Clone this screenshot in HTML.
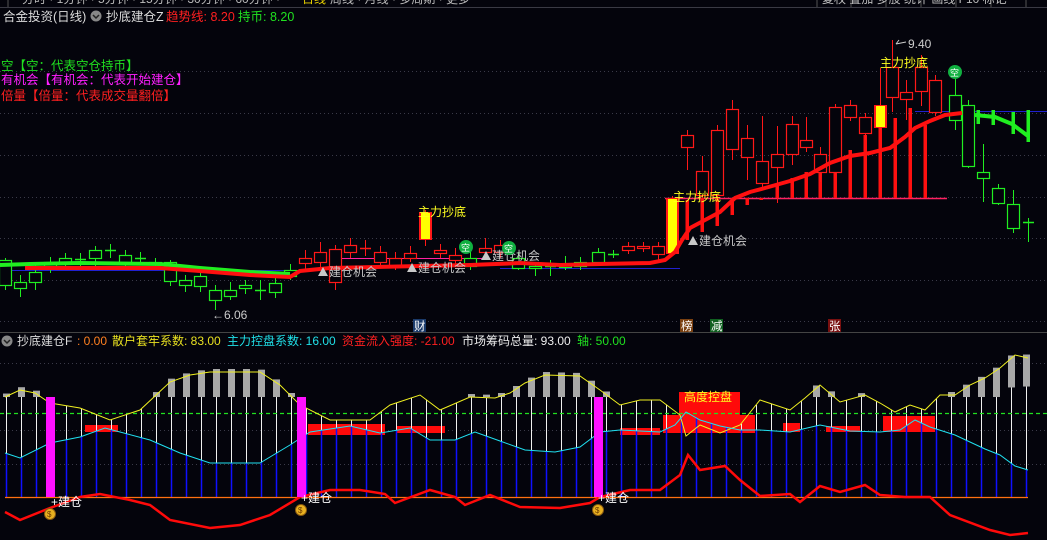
<!DOCTYPE html>
<html><head><meta charset="utf-8"><style>
html,body{margin:0;padding:0;background:#04040c;width:1047px;height:540px;overflow:hidden}
svg{display:block}
text{font-family:"Liberation Sans","Noto Sans CJK SC",sans-serif}
</style></head><body>
<svg id="s" width="1047" height="540" xmlns="http://www.w3.org/2000/svg">
<rect width="1047" height="540" fill="#04040c"/>
<!-- top menu -->
<line x1="0" y1="7.5" x2="1047" y2="7.5" stroke="#3a3a44"/>
<text x="22" y="3" fill="#bbb" font-size="12">分时 · 1分钟 · 5分钟 · 15分钟 · 30分钟 · 60分钟 · </text>
<text x="302" y="3" fill="#e8d000" font-size="12">日线</text>
<text x="330" y="3" fill="#bbb" font-size="12">周线 · 月线 · 多周期 · 更多</text>
<g stroke="#555" stroke-width="1"><line x1="817" y1="0" x2="817" y2="7"/><line x1="851" y1="0" x2="851" y2="7"/><line x1="886" y1="0" x2="886" y2="7"/><line x1="921" y1="0" x2="921" y2="7"/><line x1="956" y1="0" x2="956" y2="7"/><line x1="991" y1="0" x2="991" y2="7"/><line x1="1026" y1="0" x2="1026" y2="7"/><line x1="8" y1="0" x2="8" y2="7"/></g>
<text x="822" y="3" fill="#bbb" font-size="12">复权 叠加 多股 统计 画线 F10 标记</text>
<!-- title -->
<text x="3" y="21" fill="#ddd" font-size="12.5">合金投资(日线)</text>
<circle cx="96" cy="16" r="5.5" fill="#888"/><path d="M93 15l3 3 3-3" stroke="#222" stroke-width="1.5" fill="none"/>
<text x="106" y="21" fill="#ddd" font-size="12.5">抄底建仓Z</text>
<text x="166" y="21" fill="#ff2020" font-size="12.5">趋势线: 8.20</text>
<text x="238" y="21" fill="#20e020" font-size="12.5">持币: 8.20</text>
<text x="1" y="70" fill="#20e020" font-size="12.5">空【空：代表空仓持币】</text>
<text x="1" y="84" fill="#ff20ff" font-size="12.5">有机会【有机会：代表开始建仓】</text>
<text x="1" y="100" fill="#ff2020" font-size="12.5">倍量【倍量：代表成交量翻倍】</text>
<g id="main"></g>
<line x1="0" y1="332.5" x2="1047" y2="332.5" stroke="#444"/>
<!-- bottom header -->
<circle cx="7" cy="341" r="5.5" fill="#888"/><path d="M4 340l3 3 3-3" stroke="#222" stroke-width="1.5" fill="none"/>
<text x="17" y="345" fill="#ddd" font-size="12">抄底建仓F</text>
<text x="77" y="345" fill="#ff8020" font-size="12">: 0.00</text>
<text x="112" y="345" fill="#e8e020" font-size="12">散户套牢系数: 83.00</text>
<text x="227" y="345" fill="#20e0e8" font-size="12">主力控盘系数: 16.00</text>
<text x="342" y="345" fill="#ff2020" font-size="12">资金流入强度: -21.00</text>
<text x="462" y="345" fill="#eee" font-size="12">市场筹码总量: 93.00</text>
<text x="577" y="345" fill="#20e020" font-size="12">轴: 50.00</text>
<g id="bot"></g>
</svg>
<script>
var NS="http://www.w3.org/2000/svg";
function el(p,t,a,txt){var e=document.createElementNS(NS,t);for(var k in a)e.setAttribute(k,a[k]);if(txt)e.textContent=txt;p.appendChild(e);return e;}
var M=document.getElementById('main'),B=document.getElementById('bot');
// grid main
[71,113,155,197,238,280,321].forEach(function(y){el(M,'line',{x1:0,y1:y+.5,x2:1047,y2:y+.5,stroke:'#3a3a48','stroke-dasharray':'1 3'});});
[363,430,464].forEach(function(y){el(B,'line',{x1:0,y1:y+.5,x2:1047,y2:y+.5,stroke:'#3a3a48','stroke-dasharray':'1 3'});});
// blue lines
el(M,'line',{x1:10,y1:270.5,x2:300,y2:270.5,stroke:'#2020d0'});
el(M,'line',{x1:500,y1:268.5,x2:680,y2:268.5,stroke:'#2020d0'});
el(M,'line',{x1:915,y1:111.5,x2:1047,y2:111.5,stroke:'#2020d0'});
el(M,'line',{x1:665,y1:198.5,x2:947,y2:198.5,stroke:'#ff2060','stroke-width':1.5});
el(M,'line',{x1:340,y1:258.5,x2:490,y2:258.5,stroke:'#ff20a0','stroke-width':1});
// red volume-ish bars under trend
[[687,200,240],[702,198,232],[717,198,226],[732,198,215],[747,198,205],[761,198,200],[777,185,198],[792,178,198],[806,172,198],[820,165,198],[835,155,198],[850,150,198],[865,135,198],[880,128,198],[895,118,198],[910,108,198],[925,125,198]].forEach(function(b){el(M,'rect',{x:b[0]-1.5,y:b[1],width:3.5,height:b[2]-b[1],fill:'#ff1010'});});
// candles: x, bodyTop, bodyBot, high, low, color
var C=[[5,260,285,258,290,'g'],[20,282,288,275,297,'g'],[35,272,282,265,290,'g'],[50,262,268,257,273,'g'],[65,258,263,253,268,'g'],[80,259,260,253,266,'g'],[95,250,258,246,266,'g'],[110,250,251,244,258,'g'],[125,255,262,250,268,'g'],[140,258,259,252,265,'g'],[155,262,264,258,268,'g'],[170,262,281,260,286,'g'],[185,280,285,275,292,'g'],[200,276,286,272,292,'g'],[215,290,300,285,310,'g'],[230,290,296,282,300,'g'],[245,285,288,280,294,'g'],[260,290,291,280,300,'g'],[275,283,292,278,298,'g'],[290,270,276,264,280,'g'],
[305,258,263,250,270,'r'],[320,252,262,242,268,'r'],[335,249,282,245,290,'r'],[350,245,252,238,258,'r'],[365,248,249,240,256,'r'],[380,252,262,246,266,'r'],[395,258,266,252,270,'r'],[410,253,258,246,262,'r'],[440,250,253,244,258,'r'],[455,255,260,248,264,'r'],[470,258,266,252,270,'g'],[485,248,252,238,258,'r'],[500,245,252,240,258,'r'],[518,258,268,252,270,'g'],[535,266,268,262,276,'g'],[550,266,267,260,276,'g'],[565,265,267,256,270,'g'],[580,262,266,257,270,'g'],[598,252,262,248,266,'g'],[613,254,255,250,258,'g'],[628,246,250,242,254,'r'],[643,246,248,242,252,'r'],[658,246,254,242,262,'r'],
[687,135,147,130,170,'r'],[702,171,195,156,200,'r'],[717,130,195,125,200,'r'],[732,109,149,100,160,'r'],[747,138,157,125,180,'r'],[762,161,183,116,190,'r'],[777,154,167,126,203,'r'],[792,124,154,116,165,'r'],[806,140,147,117,152,'r'],[820,154,172,147,182,'r'],[835,107,172,104,175,'r'],[850,105,117,100,121,'r'],[865,117,133,113,140,'r'],[892,67,97,40,112,'r'],[906,92,99,80,120,'r'],[921,67,91,55,106,'r'],[935,80,112,75,116,'r'],
[955,95,120,78,130,'g'],[968,105,166,100,168,'g'],[983,172,178,144,202,'g'],[998,188,203,184,205,'g'],[1013,204,228,190,233,'g'],[1028,222,223,218,242,'g']];
C.forEach(function(c){var col=c[5]=='g'?'#20ee20':'#ff1818';
el(M,'line',{x1:c[0]+.5,y1:c[3],x2:c[0]+.5,y2:c[4],stroke:col});
var h=c[2]-c[1];if(h<1.5){el(M,'line',{x1:c[0]-5,y1:c[1]+.5,x2:c[0]+6,y2:c[1]+.5,stroke:col,'stroke-width':1.5});}
else el(M,'rect',{x:c[0]-5.5,y:c[1]+.5,width:12,height:h,fill:'#04040c',stroke:col,'stroke-width':1.2});});
// yellow filled candles
[[425,212,240,210,246],[672,198,254,196,256],[880,105,128,68,130]].forEach(function(c){el(M,'line',{x1:c[0]+.5,y1:c[3],x2:c[0]+.5,y2:c[4],stroke:'#ff1818'});el(M,'rect',{x:c[0]-6,y:c[1],width:13,height:c[2]-c[1],fill:'#ff1818'});el(M,'rect',{x:c[0]-4,y:c[1]+1,width:9,height:c[2]-c[1]-2,fill:'#ffff00'});});
// green thick line
el(M,'polyline',{points:'0,265 30,264 80,263 160,264 200,268 250,272 290,274',fill:'none',stroke:'#20ee20','stroke-width':4});
el(M,'polyline',{points:'975,115 995,117 1012,124 1028,136',fill:'none',stroke:'#20ee20','stroke-width':4});
[[978,110,124],[993,110,125],[1013,112,134],[1028,110,142]].forEach(function(b){el(M,'rect',{x:b[0]-1.5,y:b[1],width:3.5,height:b[2]-b[1],fill:'#20ee20'});});
// red trend line
el(M,'polyline',{points:'25,268 160,268 200,271 250,275 290,277 300,271 330,268 420,266 470,265 520,263 560,265 600,264 650,263 665,260 675,252 682,240 690,228 705,220 720,212 735,198 750,192 765,188 790,181 810,174 830,163 850,156 870,153 890,148 905,137 915,128 930,121 945,115 962,113',fill:'none',stroke:'#ff1010','stroke-width':4});
// markers
function jc(x,y){el(M,'path',{d:'M'+x+' '+y+'l5 -9 5 9z',fill:'#c8c8c8'});el(M,'text',{x:x+11,y:y,fill:'#c8c8c8','font-size':12},'建仓机会');}
jc(318,276);jc(407,272);jc(481,260);jc(688,245);
function kong(x,y){el(M,'circle',{cx:x,cy:y,r:7,fill:'#10b040'});el(M,'text',{x:x-5,y:y+4,fill:'#fff','font-size':9},'空');}
kong(466,247);kong(509,248);kong(955,72);
[[418,216],[673,201],[880,67]].forEach(function(p){el(M,'text',{x:p[0],y:p[1],fill:'#ffff20','font-size':12},'主力抄底');});
el(M,'text',{x:908,y:48,fill:'#ccc','font-size':12},'9.40');
el(M,'path',{d:'M896 44l10 -2M896 44l3 -4',stroke:'#ccc',fill:'none'});
el(M,'text',{x:212,y:319,fill:'#ccc','font-size':12},'←6.06');
[[413,'财','#1a3a6a','#fff'],[680,'榜','#7a4010','#fff'],[710,'减','#106020','#fff'],[828,'张','#7a1010','#fff']].forEach(function(b){el(M,'rect',{x:b[0],y:319,width:13,height:13,fill:b[2]});el(M,'text',{x:b[0]+1,y:330,fill:b[3],'font-size':11.5},b[1]);});

// bottom panel
function interp(pts,x){for(var i=0;i<pts.length-1;i++){if(x>=pts[i][0]&&x<=pts[i+1][0]){var t=(x-pts[i][0])/(pts[i+1][0]-pts[i][0]);return pts[i][1]+t*(pts[i+1][1]-pts[i][1]);}}return pts[pts.length-1][1];}
var Y=[[5,397],[20,390],[35,393],[50,403],[80,408],[110,420],[140,410],[170,382],[190,375],[210,372],[260,372],[280,385],[300,405],[330,420],[370,420],[390,405],[420,395],[440,410],[470,397],[495,398],[510,393],[525,383],[545,375],[580,376],[600,390],[620,405],[640,400],[660,400],[680,415],[686,436],[700,425],[720,433],[740,425],[760,400],[790,410],[805,398],[820,385],[840,402],[865,395],[880,403],[895,412],[910,405],[925,410],[940,395],[955,395],[970,385],[985,378],[1000,368],[1015,355],[1028,358]];
var Cy=[[5,453],[20,458],[50,443],[80,437],[105,428],[120,432],[150,440],[180,453],[210,463],[260,463],[290,445],[310,432],[350,426],[380,433],[410,428],[430,440],[455,440],[475,432],[500,441],[525,450],[555,452],[580,447],[600,432],[620,430],[660,432],[675,425],[686,412],[700,420],[720,426],[740,430],[760,430],[790,432],[820,425],[850,431],[880,432],[900,430],[915,420],[930,427],[955,435],[985,449],[1000,455],[1015,466],[1028,470]];
var R=[[5,512],[20,520],[50,508],[80,497],[100,494],[130,500],[150,505],[170,520],[210,528],[240,525],[270,515],[300,497],[330,490],[360,490],[385,494],[395,503],[430,490],[455,497],[465,505],[490,495],[520,507],[560,508],[590,503],[600,497],[630,490],[660,490],[680,475],[688,455],[700,470],[725,466],[740,480],[760,496],[790,494],[800,502],[820,486],[840,492],[865,485],[880,495],[905,497],[930,497],[950,515],[990,530],[1010,535],[1028,533]];
// red blocks
[[85,425,33,7],[308,424,77,11],[397,426,48,7],[620,428,40,7],[663,415,92,18],[679,392,61,23],[783,423,17,9],[826,426,34,6],[883,416,52,16]].forEach(function(r){el(B,'rect',{x:r[0],y:r[1],width:r[2],height:r[3],fill:'#ff0a0a'});});
for(var i=0;i<69;i++){var x=6+15*i,y=interp(Y,x),c=interp(Cy,x);
 el(B,'line',{x1:x+.5,y1:y,x2:x+.5,y2:c,stroke:'#f0f0f0'});
 el(B,'line',{x1:x+.5,y1:c,x2:x+.5,y2:497,stroke:'#1010ff','stroke-width':1.5});
 if(y<398){el(B,'rect',{x:x-3,y:y-3,width:7,height:Math.min(400-y,32),fill:'#a8a8a8'});}
}
el(B,'line',{x1:0,y1:413.5,x2:1047,y2:413.5,stroke:'#20e020','stroke-dasharray':'4 3','stroke-width':1.2});
el(B,'line',{x1:5,y1:497.5,x2:1028,y2:497.5,stroke:'#ff7010','stroke-width':1.2});
el(B,'polyline',{points:Y.map(function(p){return p.join(',')}).join(' '),fill:'none',stroke:'#f0f020','stroke-width':1});
el(B,'polyline',{points:Cy.map(function(p){return p.join(',')}).join(' '),fill:'none',stroke:'#20e0f0','stroke-width':1});
el(B,'polyline',{points:R.map(function(p){return p.join(',')}).join(' '),fill:'none',stroke:'#ff0a0a','stroke-width':2.5});
el(B,'text',{x:684,y:401,fill:'#ffff20','font-size':12},'高度控盘');
[[46,50,62,502],[297,301,312,498],[594,598,609,498]].forEach(function(m){el(B,'rect',{x:m[0],y:397,width:9,height:100,fill:'#ff10ff'});
 el(B,'text',{x:m[2]-11,y:m[3]+4,fill:'#fff','font-size':12},'+建仓');
 el(B,'circle',{cx:m[1],cy:m[3]+12,r:5.5,fill:'#e8b020',stroke:'#8a5a10'});el(B,'text',{x:m[1]-3,y:m[3]+15,fill:'#6a3a00','font-size':8},'$');});
</script>
</body></html>
